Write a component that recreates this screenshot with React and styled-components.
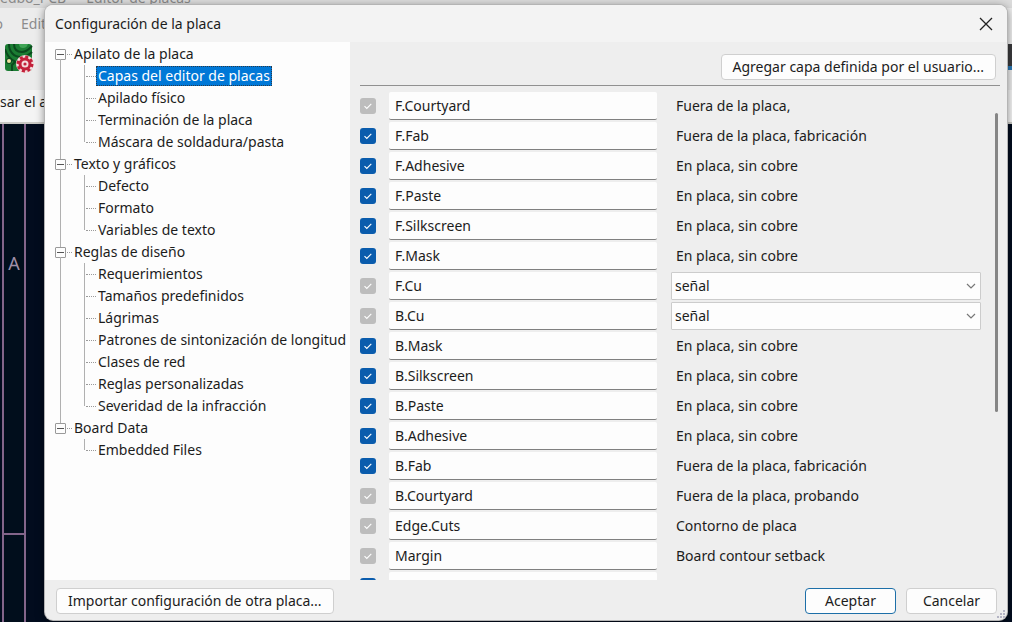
import styled, { createGlobalStyle, css } from 'styled-components';

const GlobalStyle = createGlobalStyle`
  * {
    box-sizing: border-box;
  }
  body {
    margin: 0;
    overflow: hidden;
    font-family: 'Noto Sans', 'Open Sans', sans-serif;
    font-size: 14px;
    line-height: 20px;
    color: #1c1c1c;
  }
  button, input, select {
    font: inherit;
    color: inherit;
  }
`;

const Desktop = styled.div`
  position: relative;
  display: flex;
  flex-direction: column;
  height: 100vh;
  overflow: hidden;
  background: #020c1e;
`;

const EditorTitle = styled.div`
  flex: none;
  height: 8px;
  display: flex;
  align-items: flex-end;
  gap: 20px;
  overflow: hidden;
  background: #dcdcdc;
  color: #8a8a8a;
  white-space: nowrap;
`;

const EditorMenu = styled.div`
  flex: none;
  height: 32px;
  display: flex;
  align-items: center;
  gap: 18px;
  background: #ececec;
  color: #8c8c8c;
`;

const MenuItem = styled.span`
  width: ${({ $narrow }) => ($narrow ? '3px' : 'auto')};
  display: flex;
  justify-content: flex-end;
`;

const EditorTools = styled.div`
  flex: none;
  height: 50px;
  display: flex;
  align-items: flex-start;
  justify-content: space-between;
  padding: 4px 0 0 5px;
  background: #ebebeb;
`;

const ToolStrip = styled.div`
  width: 8px;
  height: 26px;
  border-bottom: 4px solid #2a78b4;
  background: #3a3a3c;
`;

const EditorOptions = styled.div`
  flex: none;
  height: 34px;
  display: flex;
  align-items: center;
  padding-bottom: 8px;
  border-bottom: 2px solid #c9c9c4;
  background: #f4f4f4;
  white-space: nowrap;
`;

const EditorCanvas = styled.div`
  flex: 1;
  display: flex;
  overflow: hidden;
`;

const SheetFrame = styled.div`
  width: 24px;
  margin-left: 2px;
  display: flex;
  flex-direction: column;
  border: 2px solid #83658a;
  border-width: 0 2px;
  background: #010e1c;
  color: #a08fa8;
`;

const SheetZone = styled.div`
  height: 411px;
  padding-top: 124px;
  text-align: center;
  font-size: 18px;
  line-height: 30px;
  border-bottom: 2px solid #83658a;
`;

const Dialog = styled.main`
  position: absolute;
  inset: 5px 5px 2px 45px;
  display: flex;
  flex-direction: column;
  border-radius: 8px;
  overflow: hidden;
  background: #eeeeee;
  box-shadow: 0 0 0 1px #b4b4b4, 0 2px 10px rgba(0, 0, 0, 0.5);
`;

const TitleBar = styled.header`
  flex: none;
  height: 37px;
  display: flex;
  align-items: center;
  justify-content: space-between;
  padding: 0 14px 0 10px;
  background: #f3f3f3;
`;

const Title = styled.h1`
  margin: 0;
  font-size: 14px;
  font-weight: 400;
`;

const CloseButton = styled.button`
  display: flex;
  padding: 0;
  border: 0;
  background: none;
`;

const Body = styled.div`
  flex: 1;
  min-height: 0;
  display: flex;
`;

const Tree = styled.nav`
  flex: none;
  width: 305px;
  padding: 1px 0 0 10px;
  overflow: hidden;
  background: #fdfdfd;
`;

const List = styled.ul`
  margin: 0;
  padding: 0;
  list-style: none;
`;

const Branch = styled.li`
  position: relative;
  &:not(:last-child)::before {
    content: '';
    position: absolute;
    left: 5px;
    top: 16px;
    bottom: -6px;
    border-left: 1px solid #b0b0b0;
  }
`;

const BranchLabel = styled.div`
  height: 22px;
  display: flex;
  align-items: center;
  white-space: nowrap;
`;

const Toggle = styled.button`
  flex: none;
  width: 11px;
  height: 11px;
  display: flex;
  align-items: center;
  justify-content: center;
  padding: 0;
  border: 1px solid #9a9a9a;
  border-radius: 1px;
  background: #fdfdfd;
  &::before {
    content: '';
    width: 7px;
    border-top: 1px solid #555555;
  }
`;

const BranchDots = styled.span`
  width: 5px;
  margin: 0 2px 0 1px;
  border-top: 1px dotted #9a9a9a;
`;

const Leaf = styled.li`
  position: relative;
  height: 22px;
  display: flex;
  align-items: center;
  padding-left: 41px;
  white-space: nowrap;
  &::before {
    content: '';
    position: absolute;
    left: 29px;
    top: 0;
    height: ${({ $last }) => ($last ? '11px' : '22px')};
    border-left: 1px solid #b0b0b0;
  }
  &::after {
    content: '';
    position: absolute;
    left: 31px;
    top: 11px;
    width: 10px;
    border-top: 1px dotted #9a9a9a;
  }
`;

const LeafLink = styled.a`
  padding: 0 2px;
  color: inherit;
  text-decoration: none;
  ${({ $selected }) =>
    $selected &&
    css`
      background: #0078d7;
      color: #ffffff;
      outline: 1px dotted #2a3a4a;
      outline-offset: -1px;
    `}
`;

const Panel = styled.section`
  flex: 1;
  min-width: 0;
  display: flex;
  flex-direction: column;
  padding: 0 7px 0 10px;
`;

const PanelHead = styled.div`
  flex: none;
  height: 44px;
  display: flex;
  align-items: center;
  justify-content: flex-end;
  padding: 6px 4px 0 0;
  border-bottom: 1px solid #909090;
`;

const Button = styled.button`
  height: 26px;
  min-width: 91px;
  padding: 0 11px;
  line-height: 20px;
  border: 1px solid ${({ $primary }) => ($primary ? '#1d6fa8' : '#cfcfcf')};
  border-radius: 4px;
  background: #fdfdfd;
  white-space: nowrap;
`;

const ScrollArea = styled.div`
  flex: 1;
  min-height: 0;
  display: flex;
  overflow: hidden;
`;

const LayerTable = styled.table`
  flex: 1;
  align-self: flex-start;
  margin-top: 6px;
  border-collapse: collapse;
  table-layout: fixed;
`;

const Cell = styled.td`
  width: ${({ $width }) => $width || 'auto'};
  height: 30px;
  padding: 0;
  vertical-align: top;
`;

const Check = styled.input`
  appearance: none;
  display: block;
  width: 16px;
  height: 16px;
  margin: 6px 0 0;
  border-radius: 3px;
  background: #0a5cad
    url("data:image/svg+xml,%3Csvg xmlns='http://www.w3.org/2000/svg' viewBox='0 0 16 16' fill='none' stroke='white' stroke-width='1.1'%3E%3Cpath d='M4.5 8.2l2.3 2.2 4.5-4.5'/%3E%3C/svg%3E");
  &:disabled {
    background-color: #bdbdbd;
  }
`;

const NameInput = styled.input`
  display: block;
  width: 100%;
  height: 28px;
  padding: 0 6px;
  border: 0;
  border-bottom: 1px solid #808080;
  border-radius: 2px;
  background: #fdfdfd;
`;

const KindText = styled.span`
  display: block;
  padding-left: 19px;
  line-height: 28px;
  white-space: nowrap;
`;

const SelectWrap = styled.div`
  position: relative;
  margin-left: 14px;
`;

const KindSelect = styled.select`
  appearance: none;
  display: block;
  width: 100%;
  height: 28px;
  padding: 0 3px;
  border: 1px solid #cccccc;
  border-radius: 1px;
  background: #fdfdfd;
`;

const SelectArrow = styled.svg`
  position: absolute;
  right: 5px;
  top: 10px;
  pointer-events: none;
`;

const ScrollTrack = styled.div`
  flex: none;
  width: 19px;
  display: flex;
  justify-content: flex-end;
  padding: 27px 2px 0 0;
`;

const ScrollThumb = styled.div`
  width: 3px;
  height: 64%;
  border-radius: 2px;
  background: #858585;
`;

const Footer = styled.footer`
  flex: none;
  height: 40px;
  display: flex;
  align-items: center;
  gap: 10px;
  padding: 2px 10px 0 11px;
`;

const Spacer = styled.div`
  flex: 1;
`;

const Grip = styled.svg`
  position: absolute;
  right: 1px;
  bottom: 1px;
`;

const tree = [
  {
    label: 'Apilato de la placa',
    items: [
      'Capas del editor de placas',
      'Apilado físico',
      'Terminación de la placa',
      'Máscara de soldadura/pasta',
    ],
  },
  { label: 'Texto y gráficos', items: ['Defecto', 'Formato', 'Variables de texto'] },
  {
    label: 'Reglas de diseño',
    items: [
      'Requerimientos',
      'Tamaños predefinidos',
      'Lágrimas',
      'Patrones de sintonización de longitud',
      'Clases de red',
      'Reglas personalizadas',
      'Severidad de la infracción',
    ],
  },
  { label: 'Board Data', items: ['Embedded Files'] },
];

const layers = [
  { name: 'F.Courtyard', kind: 'Fuera de la placa,', locked: true },
  { name: 'F.Fab', kind: 'Fuera de la placa, fabricación' },
  { name: 'F.Adhesive', kind: 'En placa, sin cobre' },
  { name: 'F.Paste', kind: 'En placa, sin cobre' },
  { name: 'F.Silkscreen', kind: 'En placa, sin cobre' },
  { name: 'F.Mask', kind: 'En placa, sin cobre' },
  { name: 'F.Cu', kind: 'señal', locked: true, copper: true },
  { name: 'B.Cu', kind: 'señal', locked: true, copper: true },
  { name: 'B.Mask', kind: 'En placa, sin cobre' },
  { name: 'B.Silkscreen', kind: 'En placa, sin cobre' },
  { name: 'B.Paste', kind: 'En placa, sin cobre' },
  { name: 'B.Adhesive', kind: 'En placa, sin cobre' },
  { name: 'B.Fab', kind: 'Fuera de la placa, fabricación' },
  { name: 'B.Courtyard', kind: 'Fuera de la placa, probando', locked: true },
  { name: 'Edge.Cuts', kind: 'Contorno de placa', locked: true },
  { name: 'Margin', kind: 'Board contour setback', locked: true },
  { name: '', kind: '' },
];

function BoardIcon() {
  return (
    <svg width="29" height="29" viewBox="0 0 29 29" aria-hidden="true">
      <rect width="27" height="27" rx="3" fill="#1b7d33" />
      <g fill="none" stroke="#0b4a1e" strokeWidth="2">
        <path d="M9 0c0 5 3 8 8 8s7-3 10-6" />
        <path d="M4 0c0 8 5 13 12 13 5 0 8-2 11-5" />
        <path d="M0 5c2 7 6 11 11 13" />
        <path d="M7 27v-6l3-3" />
      </g>
      <path d="M14 0c0 3 2 4 4 4s4-1 5-4" fill="#3fa455" />
      <circle cx="4" cy="17" r="3" fill="#0b4a1e" />
      <circle cx="4" cy="17" r="2" fill="#efe3a0" />
      <circle cx="20" cy="20" r="9" fill="#f3dcdc" />
      <circle cx="20" cy="20" r="7" fill="none" stroke="#c3203a" strokeWidth="3" strokeDasharray="3 2.5" />
      <circle cx="20" cy="20" r="5" fill="none" stroke="#c3203a" strokeWidth="3" />
      <circle cx="20" cy="20" r="1.6" fill="#c3203a" />
    </svg>
  );
}

function LayerRow({ layer }) {
  const { name, kind, locked, copper } = layer;
  return (
    <tr>
      <Cell $width="29px">
        <Check type="checkbox" defaultChecked disabled={locked} aria-label={`Capa ${name}`} />
      </Cell>
      <Cell $width="268px">
        <NameInput defaultValue={name} aria-label={`Nombre ${name}`} />
      </Cell>
      <Cell>
        {copper ? (
          <SelectWrap>
            <KindSelect defaultValue={kind} aria-label={`Tipo ${name}`}>
              <option>{kind}</option>
            </KindSelect>
            <SelectArrow width="10" height="8" viewBox="0 0 10 8">
              <path d="M1 2l4 4 4-4" fill="none" stroke="#777777" strokeWidth="1.2" />
            </SelectArrow>
          </SelectWrap>
        ) : (
          <KindText>{kind}</KindText>
        )}
      </Cell>
    </tr>
  );
}

export default function App() {
  return (
    <>
      <GlobalStyle />
      <Desktop>
        <EditorTitle>
          <span>edbo_PCB</span>
          <span>Editor de placas</span>
        </EditorTitle>
        <EditorMenu>
          <MenuItem $narrow>o</MenuItem>
          <MenuItem>Edit</MenuItem>
        </EditorMenu>
        <EditorTools>
          <BoardIcon />
          <ToolStrip />
        </EditorTools>
        <EditorOptions>sar el a</EditorOptions>
        <EditorCanvas>
          <SheetFrame>
            <SheetZone>A</SheetZone>
          </SheetFrame>
        </EditorCanvas>

        <Dialog>
          <TitleBar>
            <Title>Configuración de la placa</Title>
            <CloseButton aria-label="Cerrar">
              <svg width="14" height="14" viewBox="0 0 14 14">
                <path d="M1 1l12 12M13 1L1 13" stroke="#222222" strokeWidth="1.3" />
              </svg>
            </CloseButton>
          </TitleBar>
          <Body>
            <Tree>
              <List>
                {tree.map(({ label, items }) => (
                  <Branch key={label}>
                    <BranchLabel>
                      <Toggle aria-label={`Contraer ${label}`} />
                      <BranchDots />
                      {label}
                    </BranchLabel>
                    <List>
                      {items.map((item, i) => (
                        <Leaf key={item} $last={i === items.length - 1}>
                          <LeafLink href="#" $selected={item === 'Capas del editor de placas'}>
                            {item}
                          </LeafLink>
                        </Leaf>
                      ))}
                    </List>
                  </Branch>
                ))}
              </List>
            </Tree>
            <Panel>
              <PanelHead>
                <Button>Agregar capa definida por el usuario...</Button>
              </PanelHead>
              <ScrollArea>
                <LayerTable>
                  <tbody>
                    {layers.map((layer) => (
                      <LayerRow key={layer.name} layer={layer} />
                    ))}
                  </tbody>
                </LayerTable>
                <ScrollTrack>
                  <ScrollThumb />
                </ScrollTrack>
              </ScrollArea>
            </Panel>
          </Body>
          <Footer>
            <Button>Importar configuración de otra placa...</Button>
            <Spacer />
            <Button $primary>Aceptar</Button>
            <Button>Cancelar</Button>
          </Footer>
          <Grip width="10" height="10" viewBox="0 0 10 10" fill="#b4b4c4">
            <path d="M7 1h2v2H7zM4 4h2v2H4zM7 4h2v2H7zM1 7h2v2H1zM4 7h2v2H4zM7 7h2v2H7z" />
          </Grip>
        </Dialog>
      </Desktop>
    </>
  );
}
